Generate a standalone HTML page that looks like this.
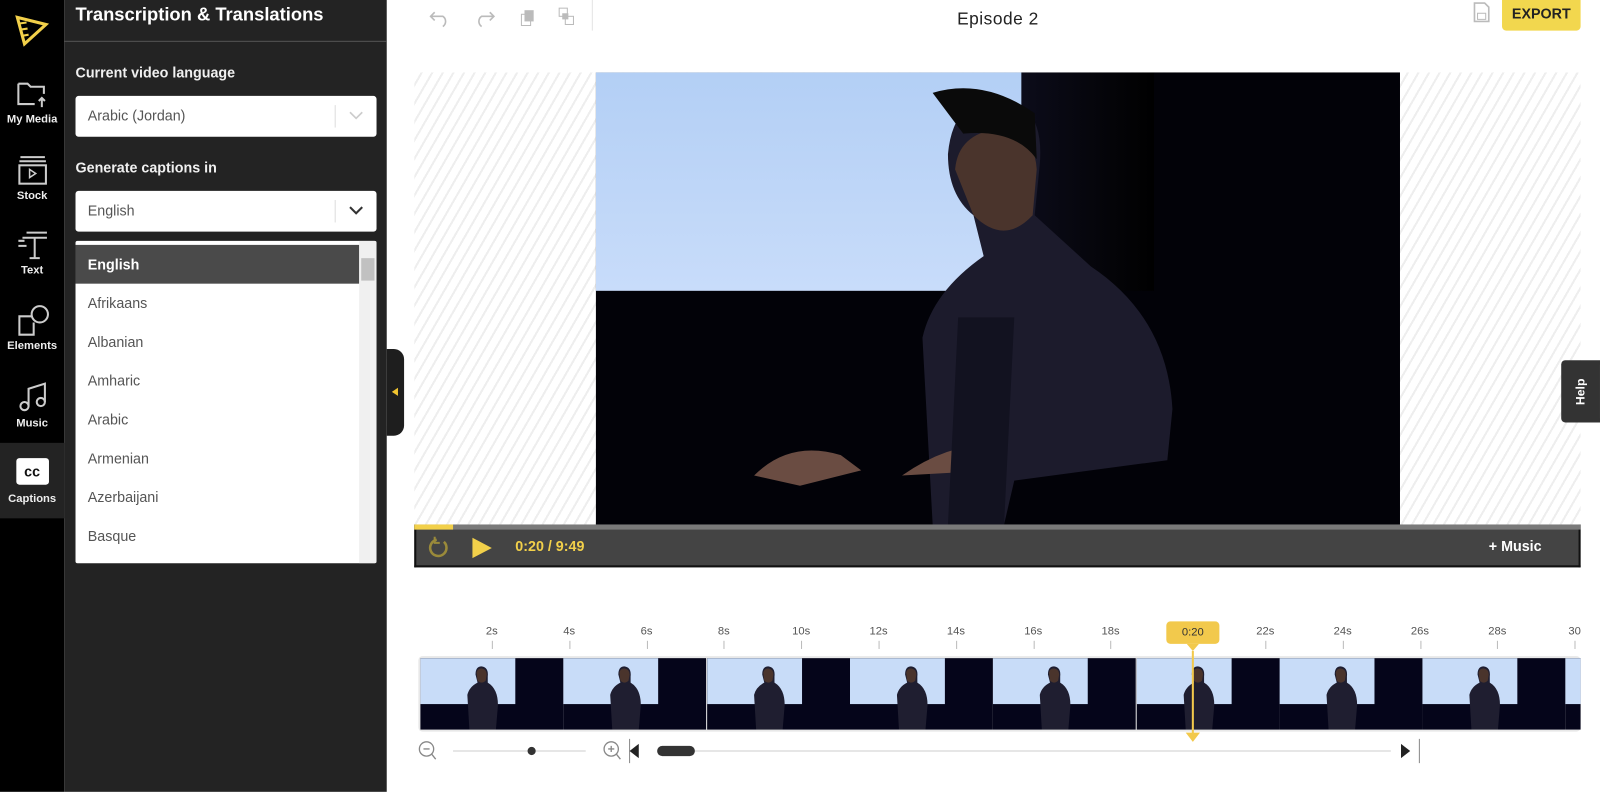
<!DOCTYPE html>
<html><head><style>
*{box-sizing:border-box;margin:0;padding:0}
html,body{width:1600px;height:792px;overflow:hidden;background:#fff}
#w{position:absolute;left:0;top:0;width:1568px;height:776px;transform:scale(1.0204);transform-origin:0 0;font-family:"Liberation Sans",sans-serif}
.abs{position:absolute}
.nav{left:0;top:0;width:63px;height:776px;background:#000}
.ni{position:absolute;left:0;width:63px;text-align:center;color:#eee;font-size:11px;font-weight:bold}
.panel{left:63px;top:0;width:316px;height:776px;background:#232323;color:#f0f0f0}
.sel{position:absolute;left:11px;width:295px;height:40px;background:#fff;border-radius:3px;color:#555;font-size:14px;padding:11px 12px}
.sel .bar{position:absolute;right:40px;top:9px;width:1px;height:22px;background:#ddd}
.list{position:absolute;left:11px;top:236px;width:295px;height:316px;background:#fff;overflow:hidden;border-radius:2px}
.list div{height:38px;line-height:38px;padding-left:12px;font-size:14px;color:#555}
.hatch{background:repeating-linear-gradient(-60deg,#fff 0 7px,#eee 7px 9px)}
.thumb{position:absolute;top:645px;width:140px;height:70px;background:#05051a;overflow:hidden}
.tick{position:absolute;top:613px;font-size:11px;color:#555;transform:translateX(-50%)}
.tl{position:absolute;top:628px;width:1px;height:8px;background:#bbb}
</style></head><body><div id="w">
<div class="abs nav">
 <svg class="abs" style="left:14px;top:14px" width="34" height="32" viewBox="0 0 34 32"><path d="M3 3 L31 10 L10 29 Z" fill="none" stroke="#f2d04a" stroke-width="3"/><path d="M5 9 L12 8 M6 15 L13 14 M8 21 L14 20" stroke="#f2d04a" stroke-width="2"/></svg>
 <div class="ni" style="top:78px"><svg width="32" height="30" viewBox="0 0 32 30"><path d="M2 4h9l3 3h13v7M2 4v20h16" fill="none" stroke="#ccc" stroke-width="2"/><path d="M25 27v-9m-3 3l3-3 3 3" fill="none" stroke="#ccc" stroke-width="2"/></svg><div>My Media</div></div>
 <div class="ni" style="top:151px"><svg width="32" height="32" viewBox="0 0 32 32"><path d="M4 3h24M3 7h26" stroke="#ccc" stroke-width="2"/><rect x="3" y="11" width="26" height="18" fill="none" stroke="#ccc" stroke-width="2"/><path d="M13 15v8l6-4z" fill="none" stroke="#ccc" stroke-width="1.5"/></svg><div>Stock</div></div>
 <div class="ni" style="top:224px"><svg width="32" height="32" viewBox="0 0 32 32"><path d="M10 4h20M6 9h24M18 9v20M13 29h10M2 12h6M2 17h8" stroke="#ccc" stroke-width="2"/></svg><div>Text</div></div>
 <div class="ni" style="top:298px"><svg width="34" height="32" viewBox="0 0 34 32"><circle cx="24" cy="10" r="8" fill="none" stroke="#ccc" stroke-width="2"/><path d="M16 12H4v18h14V18" fill="none" stroke="#ccc" stroke-width="2"/></svg><div>Elements</div></div>
 <div class="ni" style="top:372px"><svg width="32" height="34" viewBox="0 0 32 34"><path d="M12 26V9l16-5v18" fill="none" stroke="#ccc" stroke-width="2"/><circle cx="8" cy="26" r="4" fill="none" stroke="#ccc" stroke-width="2"/><circle cx="24" cy="22" r="4" fill="none" stroke="#ccc" stroke-width="2"/></svg><div>Music</div></div>
 <div class="ni" style="top:434px;height:74px;background:#232323;padding-top:15px"><div style="margin:0 auto;width:32px;height:26px;background:#fff;border-radius:3px;color:#111;font-size:14px;font-weight:900;line-height:26px">cc</div><div style="margin-top:8px">Captions</div></div>
</div>
<div class="abs panel">
 <div style="position:absolute;left:11px;top:4px;font-size:18px;font-weight:bold;color:#fff">Transcription &amp; Translations</div>
 <div style="position:absolute;left:0;top:40px;width:316px;height:1px;background:#555"></div>
 <div style="position:absolute;left:11px;top:63px;font-size:14px;font-weight:bold">Current video language</div>
 <div class="sel" style="top:94px">Arabic (Jordan)<div class="bar"></div><svg class="abs" style="right:13px;top:14px" width="14" height="10"><path d="M1 2l6 6 6-6" fill="none" stroke="#ccc" stroke-width="1.6"/></svg></div>
 <div style="position:absolute;left:11px;top:156px;font-size:14px;font-weight:bold">Generate captions in</div>
 <div class="sel" style="top:187px">English<div class="bar"></div><svg class="abs" style="right:13px;top:14px" width="14" height="10"><path d="M1 2l6 6 6-6" fill="none" stroke="#333" stroke-width="2"/></svg></div>
 <div class="list">
  <div style="background:#4a4a4a;color:#fff;font-weight:bold;margin-top:4px;margin-right:17px">English</div>
  <div>Afrikaans</div><div>Albanian</div><div>Amharic</div><div>Arabic</div><div>Armenian</div><div>Azerbaijani</div><div>Basque</div>
  <div class="abs" style="right:0;top:0;width:17px;height:316px;background:#f0f0f0"></div>
  <div class="abs" style="right:2px;top:17px;width:13px;height:22px;background:#c1c1c1"></div>
 </div>
</div>
<div class="abs" style="left:379px;top:342px;width:17px;height:85px;background:#1e1e1e;border-radius:0 10px 10px 0"><div class="abs" style="left:5px;top:38px;width:0;height:0;border-right:6px solid #f2c530;border-top:4px solid transparent;border-bottom:4px solid transparent"></div></div>
<svg class="abs" style="left:420px;top:6px" width="170" height="22"><path d="M6 6l-4 4 4 4M2 10h12a6 6 0 0 1 0 10" fill="none" stroke="#bbb" stroke-width="1.6"/><path d="M60 6l4 4-4 4M64 10H52a6 6 0 0 0 0 10" fill="none" stroke="#bbb" stroke-width="1.6"/><rect x="94" y="4" width="9" height="11" fill="#bbb"/><rect x="91" y="8" width="9" height="11" fill="none" stroke="#bbb"/><rect x="128" y="2" width="8" height="8" fill="none" stroke="#bbb"/><rect x="134" y="10" width="8" height="8" fill="none" stroke="#bbb"/><rect x="131" y="7" width="6" height="6" fill="#bbb"/></svg>
<div class="abs" style="left:580px;top:0;width:1px;height:30px;background:#e5e5e5"></div>
<div class="abs" style="left:900px;top:9px;width:156px;text-align:center;font-size:17px;color:#222;letter-spacing:.5px">Episode 2</div>
<svg class="abs" style="left:1442px;top:1px" width="20" height="22"><path d="M3 2h10l4 4v14H3z" fill="none" stroke="#bbb" stroke-width="1.6"/><rect x="6" y="12" width="8" height="6" fill="none" stroke="#bbb"/></svg>
<div class="abs" style="left:1472px;top:0;width:77px;height:30px;background:#f2d74e;border-radius:0 0 4px 4px;text-align:center;line-height:26px;font-size:14px;font-weight:bold;color:#222">EXPORT</div>
<div class="abs hatch" style="left:406px;top:71px;width:1143px;height:443px"></div>
<div class="abs" style="left:584px;top:71px;width:788px;height:443px;background:#020208;overflow:hidden">
 <div class="abs" style="left:0;top:0;width:417px;height:214px;background:linear-gradient(180deg,#b3cff5,#c8dcfa)"></div>
 <div class="abs" style="left:417px;top:0;width:130px;height:214px;background:linear-gradient(90deg,#0c0c1a,#000)"></div>
 <svg class="abs" style="left:0;top:0" width="788" height="443"><path d="M330 443 L320 260 Q330 215 380 180 L370 140 Q345 120 345 80 Q350 25 395 25 Q440 30 435 90 L430 140 L485 190 Q560 240 565 330 L560 380 L410 400 L400 443 Z" fill="#1c1b2c"/><path d="M352 95 Q355 60 395 55 Q430 60 432 95 L428 140 Q400 170 370 140 Z" fill="#4a342c"/><path d="M330 20 Q380 5 430 40 L432 85 Q410 55 360 60 Z" fill="#0a0a0a"/><path d="M155 395 Q190 360 240 375 L260 390 L200 405 Z M300 395 Q350 360 400 365 L390 390 Z" fill="#6a4c42"/><path d="M355 240 L345 443 L400 443 L410 240 Z" fill="#121220"/></svg>
</div>
<div class="abs" style="left:406px;top:514px;width:1143px;height:42px;background:#444;border:2px solid #111;border-top:none"></div>
<div class="abs" style="left:406px;top:514px;width:1143px;height:5px;background:#7a7a7a"></div>
<div class="abs" style="left:406px;top:514px;width:38px;height:5px;background:#f2d04a"></div>
<svg class="abs" style="left:420px;top:525px" width="70" height="24"><path d="M8 4 A8 8 0 1 0 15 6" fill="none" stroke="#9a8a3a" stroke-width="2.5"/><path d="M6 1v6h5" fill="none" stroke="#9a8a3a" stroke-width="2"/><path d="M43 2v20l19-10z" fill="#f2d04a"/></svg>
<div class="abs" style="left:505px;top:527px;font-size:14px;font-weight:bold;color:#f2d04a">0:20 / 9:49</div>
<div class="abs" style="left:1459px;top:527px;font-size:14px;font-weight:bold;color:#fff">+ Music</div>
<div class="abs" style="left:1530px;top:353px;width:38px;height:61px;background:#333;border-radius:4px 0 0 4px"><div style="position:absolute;left:12px;top:44px;transform:rotate(-90deg);transform-origin:0 0;color:#fff;font-size:12px;font-weight:bold">Help</div></div>
<div id="ticks"></div>
<div class="abs" style="left:1143px;top:609px;width:52px;height:22px;background:#f2c94c;border-radius:4px;text-align:center;line-height:22px;font-size:11px;color:#333">0:20</div>
<div class="abs" style="left:1163px;top:631px;border-top:7px solid #f2c94c;border-left:6px solid transparent;border-right:6px solid transparent"></div>
<div class="abs" style="left:410px;top:643px;width:1139px;height:74px;background:#e8e8e8;border-radius:4px"></div>
<div id="thumbs"></div>
<div class="abs" style="left:1168px;top:638px;width:2px;height:82px;background:#f2c94c"></div>
<div class="abs" style="left:1162px;top:718px;border-top:9px solid #f2c94c;border-left:7px solid transparent;border-right:7px solid transparent"></div>
<svg class="abs" style="left:408px;top:724px" width="990" height="24"><circle cx="10" cy="10" r="7" fill="none" stroke="#888" stroke-width="1.3"/><path d="M7 10h6M15 15l4 5" stroke="#888" stroke-width="1.3"/><path d="M36 12h130" stroke="#ddd" stroke-width="1.5"/><circle cx="113" cy="12" r="4" fill="#333"/><circle cx="191" cy="10" r="7" fill="none" stroke="#888" stroke-width="1.3"/><path d="M188 10h6M191 7v6M196 15l4 5" stroke="#888" stroke-width="1.3"/><path d="M209 0v24" stroke="#888"/><path d="M218 5v14l-9-7z" fill="#222"/><path d="M240 12h715" stroke="#ddd" stroke-width="1.5"/><rect x="236" y="7" width="37" height="10" rx="5" fill="#333"/><path d="M965 5v14l9-7z" fill="#222"/><path d="M983 0v24" stroke="#888"/></svg>
</div>
<script>
var t='',labels=['2s','4s','6s','8s','10s','12s','14s','16s','18s','','22s','24s','26s','28s','30'];
for(var i=0;i<15;i++){var x=482+i*75.8;if(labels[i]){t+='<div class="tick" style="left:'+x+'px">'+labels[i]+'</div>';t+='<div class="tl" style="left:'+x+'px"></div>';}}
document.getElementById('ticks').innerHTML=t;
var h='';for(var i=0;i<9;i++){var x=412+i*140.3;var w=Math.min(140,1549-x);
h+='<div class="thumb" style="left:'+x+'px;width:'+w+'px"><div class="abs" style="left:0;top:0;width:93px;height:45px;background:#c8dcf8"></div><svg class="abs" style="left:40px;top:6px" width="40" height="64"><path d="M8 64 L6 30 Q8 22 16 18 L14 10 Q14 2 20 2 Q27 3 26 12 L26 18 Q36 24 36 40 L34 64 Z" fill="#1f1e30"/><path d="M15 8 Q16 4 20 4 Q25 5 25 10 L24 16 Q20 20 16 16Z" fill="#4a342c"/></svg></div>';}
document.getElementById('thumbs').innerHTML=h;
</script>
</body></html>
